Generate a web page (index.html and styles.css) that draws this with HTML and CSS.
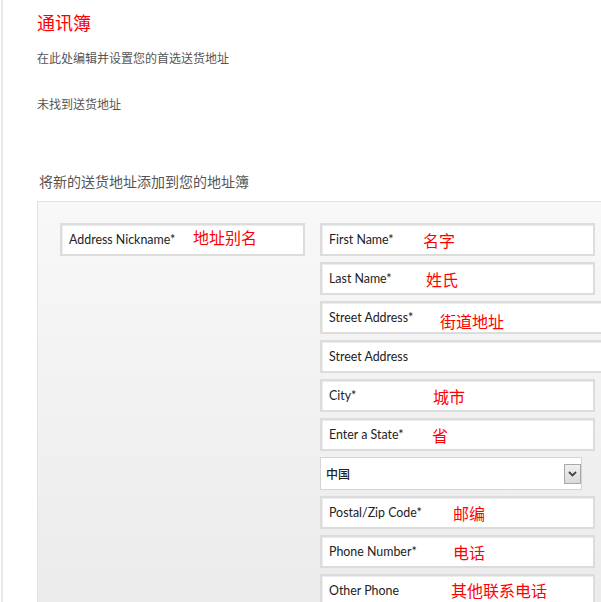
FILE: index.html
```html
<!DOCTYPE html>
<html lang="zh-CN">
<head>
<meta charset="utf-8">
<title>通讯簿</title>
<link rel="stylesheet" href="styles.css">
</head>
<body>
<div class="page">
  <h1 class="title">通讯簿</h1>
  <p class="intro">在此处编辑并设置您的首选送货地址</p>
  <p class="empty">未找到送货地址</p>
  <h2 class="add-title">将新的送货地址添加到您的地址簿</h2>
  <div class="panel">
    <div class="col-left">
      <div class="field nick"><span class="label">Address Nickname*</span><span class="note n-nick">地址别名</span></div>
    </div>
    <div class="col-right">
      <div class="field"><span class="label">First Name*</span><span class="note n-first">名字</span></div>
      <div class="field"><span class="label">Last Name*</span><span class="note n-last">姓氏</span></div>
      <div class="field wide"><span class="label">Street Address*</span><span class="note n-street">街道地址</span></div>
      <div class="field wide"><span class="label">Street Address</span></div>
      <div class="field"><span class="label">City*</span><span class="note n-city">城市</span></div>
      <div class="field"><span class="label">Enter a State*</span><span class="note n-state">省</span></div>
      <div class="select"><span class="select-value">中国</span><span class="select-btn"><svg width="9" height="6" viewBox="0 0 9 6"><path d="M1 1 L4.5 4.5 L8 1" fill="none" stroke="#444" stroke-width="1.8"/></svg></span></div>
      <div class="field"><span class="label">Postal/Zip Code*</span><span class="note n-zip">邮编</span></div>
      <div class="field"><span class="label">Phone Number*</span><span class="note n-phone">电话</span></div>
      <div class="field"><span class="label">Other Phone</span><span class="note n-other">其他联系电话</span></div>
    </div>
  </div>
</div>
</body>
</html>
```
FILE: styles.css
```css
html, body {
  margin: 0;
  padding: 0;
  background: #fff;
  overflow: hidden;
}
.page {
  margin-left: 1px;
  border-left: 2px solid #e8e8e8;
  padding-left: 34px;
  width: 800px;
  min-height: 602px;
  font-family: "Noto Sans CJK SC", "Noto Sans", sans-serif;
  color: #555;
}
.title {
  margin: 0;
  padding-top: 10px;
  font-size: 18px;
  line-height: 24px;
  font-weight: 400;
  color: #f00;
}
.intro {
  margin: 15px 0 0;
  font-size: 12px;
  line-height: 18px;
}
.empty {
  margin: 28px 0 0;
  font-size: 12px;
  line-height: 18px;
}
.add-title {
  margin: 58px 0 0 2px;
  font-size: 14px;
  line-height: 20px;
  font-weight: 400;
  color: #555;
}
.panel {
  margin-top: 10px;
  border: 1px solid #e2e2e2;
  background: linear-gradient(#f8f8f8, #ebebeb 400px);
  padding: 21px 0 40px 22px;
  display: flex;
  gap: 15px;
  align-items: flex-start;
}
.col-left {
  width: 245px;
}
.col-right {
  display: flex;
  flex-direction: column;
  gap: 6px;
}
.field {
  position: relative;
  box-sizing: border-box;
  height: 33px;
  width: 275px;
  background: #fff;
  border: 2px solid #dcdcdc;
  box-shadow: inset 1px 1px 0 #ececec;
  display: flex;
  align-items: center;
  padding-left: 7px;
}
.field.nick {
  width: 245px;
}
.field.wide {
  width: 320px;
}
.label {
  font-family: Lato, "Noto Sans CJK SC", sans-serif;
  font-size: 12.4px;
  color: #222;
}
.note {
  position: absolute;
  top: 4px;
  font-family: "Noto Sans CJK SC", sans-serif;
  font-size: 16px;
  line-height: 22px;
  color: #f00;
}
.n-nick { left: 131px; top: 1px; }
.n-first { left: 101px; }
.n-last { left: 104px; }
.n-street { left: 118px; top: 7px; }
.n-city { left: 111px; }
.n-state { left: 110px; }
.n-zip { left: 131px; }
.n-phone { left: 131px; }
.n-other { left: 129px; top: 3px; }
.select {
  box-sizing: border-box;
  width: 262px;
  height: 33px;
  background: #fff;
  border: 1px solid #d4d4d4;
  display: flex;
  align-items: center;
  padding-left: 5px;
  padding-right: 0;
}
.select-value {
  font-family: "Noto Sans CJK SC", sans-serif;
  font-size: 12px;
  font-weight: 500;
  color: #222;
}
.select-btn {
  margin-left: auto;
  box-sizing: border-box;
  width: 17px;
  height: 20px;
  border: 1px solid #a9a9a9;
  background: linear-gradient(#f0f0f0, #dadada);
  display: flex;
  align-items: center;
  justify-content: center;
}
```
